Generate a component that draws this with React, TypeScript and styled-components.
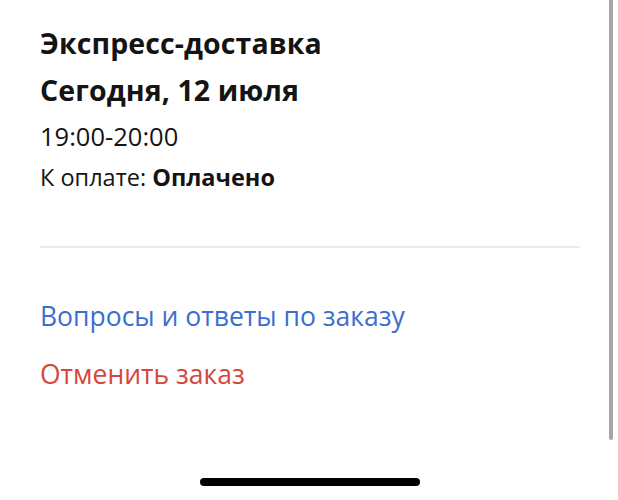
import * as React from "react";
import styled, { createGlobalStyle } from "styled-components";

const GlobalStyle = createGlobalStyle`
  html, body {
    margin: 0;
    padding: 0;
    background: #ffffff;
  }
  body {
    font-family: "Open Sans", Lato, "Liberation Sans", sans-serif;
    -webkit-font-smoothing: antialiased;
  }
`;

const Screen = styled.div`
  position: relative;
  width: 618px;
  height: 500px;
  overflow: hidden;
  background: #ffffff;
  display: flex;
  flex-direction: column;
`;

const Content = styled.div`
  padding: 20px 38px 0 40px;
  display: flex;
  flex-direction: column;
`;

const Title = styled.div`
  font-size: 28.5px;
  font-weight: 700;
  color: #141414;
  line-height: 47px;
  letter-spacing: 0.1px;
`;

const Line = styled.div<{ $size: number; $lh: number }>`
  font-size: ${p => p.$size}px;
  line-height: ${p => p.$lh}px;
  color: #141414;
`;

const Strong = styled.span`
  font-weight: 700;
`;

const Divider = styled.div`
  height: 2px;
  background: #ebebeb;
  margin-top: 50px;
`;

const Links = styled.div`
  display: flex;
  flex-direction: column;
  gap: 18px;
  margin-top: 48px;
`;

const LinkText = styled.a<{ $tone: "blue" | "red" }>`
  font-size: 26.5px;
  line-height: 40px;
  text-decoration: none;
  color: ${p => (p.$tone === "blue" ? "#3a6fd0" : "#d6463a")};
`;

const Scrollbar = styled.div`
  position: absolute;
  top: 0;
  right: 5px;
  width: 4px;
  height: 440px;
  border-radius: 0 0 2px 2px;
  background: #a6a6a6;
`;

const HomeIndicator = styled.div`
  position: absolute;
  left: 200px;
  bottom: 14px;
  width: 220px;
  height: 8px;
  border-radius: 4px;
  background: #000000;
`;

export default function App() {
  return (
    <Screen>
      <GlobalStyle />
      <Content>
        <Title>Экспресс-доставка</Title>
        <Title>Сегодня, 12 июля</Title>
        <Line $size={25.5} $lh={45}>
          19:00-20:00
        </Line>
        <Line $size={23.5} $lh={37}>
          К оплате: <Strong>Оплачено</Strong>
        </Line>
        <Divider />
        <Links>
          <LinkText $tone="blue" href="#">
            Вопросы и ответы по заказу
          </LinkText>
          <LinkText $tone="red" href="#">
            Отменить заказ
          </LinkText>
        </Links>
      </Content>
      <Scrollbar />
      <HomeIndicator />
    </Screen>
  );
}
